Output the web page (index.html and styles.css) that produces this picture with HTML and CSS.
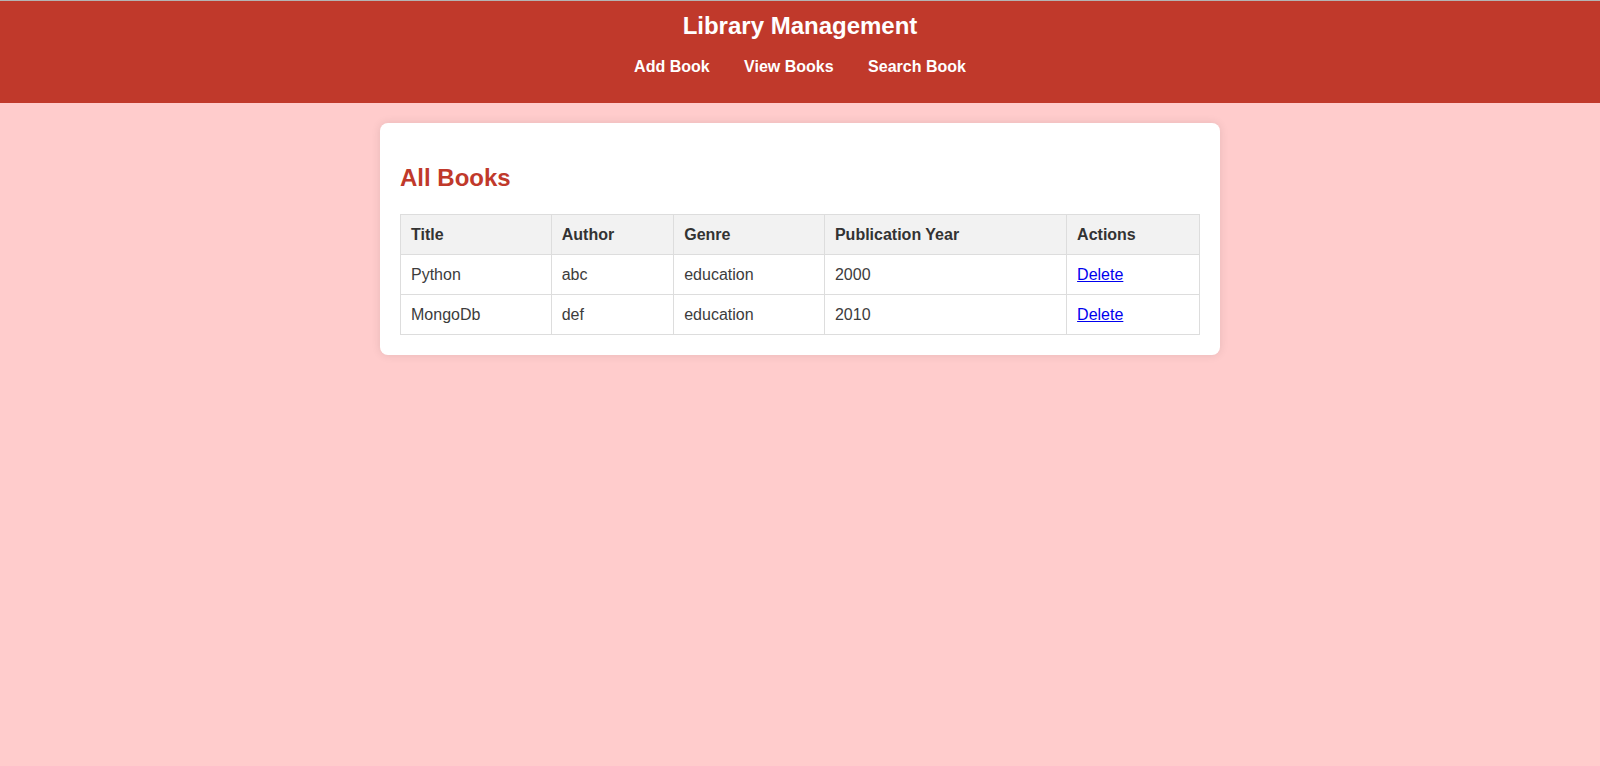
FILE: index.html
```html
<!DOCTYPE html>
<html lang="en">
<head>
<meta charset="utf-8">
<title>Library Management</title>
<link rel="stylesheet" href="styles.css">
</head>
<body>
<header class="site-header">
  <h1 class="site-title">Library Management</h1>
  <nav class="site-nav">
    <a href="#">Add Book</a>
    <a href="#">View Books</a>
    <a href="#">Search Book</a>
  </nav>
</header>
<main class="card">
  <h2 class="card-title">All Books</h2>
  <table class="books">
    <thead>
      <tr><th>Title</th><th>Author</th><th>Genre</th><th>Publication Year</th><th>Actions</th></tr>
    </thead>
    <tbody>
      <tr><td>Python</td><td>abc</td><td>education</td><td>2000</td><td><a href="#" class="delete">Delete</a></td></tr>
      <tr><td>MongoDb</td><td>def</td><td>education</td><td>2010</td><td><a href="#" class="delete">Delete</a></td></tr>
    </tbody>
  </table>
</main>
</body>
</html>
```
FILE: styles.css
```css
html, body {
  margin: 0;
  padding: 0;
}
body {
  background: #ffcccc;
  font-family: "Liberation Sans", Arial, sans-serif;
  color: #333;
  border-top: 1px solid #b4b4b4;
}
.site-header {
  background: #c0392b;
  color: #fff;
  text-align: center;
  padding: 11px 0 27px;
}
.site-title {
  margin: 0 0 18px;
  font-size: 24px;
  font-weight: bold;
}
.site-nav a {
  color: #fff;
  text-decoration: none;
  font-weight: bold;
  font-size: 16px;
  margin: 0 15px;
}
.card {
  display: block;
  max-width: 800px;
  margin: 20px auto;
  padding: 20px;
  background: #fff;
  border-radius: 8px;
  box-shadow: 0 0 10px rgba(0, 0, 0, 0.1);
}
.card-title {
  color: #c0392b;
  font-size: 24px;
  margin: 21px 0 22px;
}
.books {
  width: 100%;
  border-collapse: collapse;
  font-size: 16px;
}
.books th, .books td {
  border: 1px solid #ddd;
  padding: 10px;
  line-height: 19px;
  text-align: left;
}
.books th {
  background: #f2f2f2;
  color: #333;
  font-weight: bold;
}
.books td {
  color: #3c3c3c;
}
.delete {
  color: #0000ee;
  text-decoration: underline;
}
```
